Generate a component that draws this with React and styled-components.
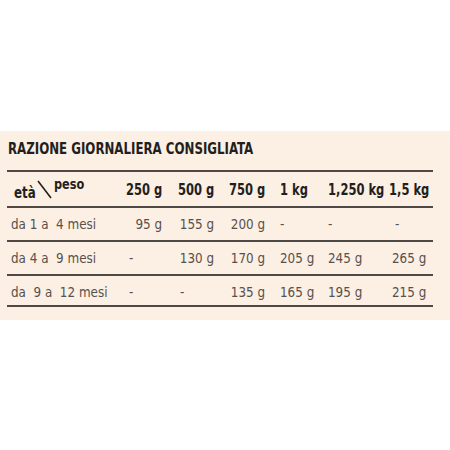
import React from "react";
import styled, { createGlobalStyle } from "styled-components";

const GlobalStyle = createGlobalStyle`
    html, body {
        margin: 0;
        padding: 0;
        background: #ffffff;
    }
    body {
        font-family: "Liberation Sans Narrow", "DejaVu Sans Condensed", "Liberation Sans", sans-serif;
    }
`;

const Page = styled.div`
    width: 450px;
    height: 450px;
    padding-top: 131px;
    box-sizing: border-box;
`;

const Panel = styled.div`
    background-color: #fcefe4;
    padding: 9px 17px 13px 7px;
`;

const Title = styled.h2`
    margin: 0 0 12px 1px;
    font-size: 15px;
    font-weight: bold;
    color: #231f1c;
    line-height: 18px;
    white-space: nowrap;
`;

// the print uses a condensed face, so the text is squeezed horizontally
const Squeeze = styled.span`
    display: inline-block;
    flex-shrink: 0;
    transform: scaleX(${props => props.$scale || 0.95});
    transform-origin: ${props => props.$origin || "left"} center;
    white-space: pre;
`;

const Table = styled.div`
    border-top: 2px solid #4f4a45;
`;

const Row = styled.div`
    display: grid;
    grid-template-columns: 119px 51px 52px 51px 48px 61px 44px;
    align-items: center;
    height: ${props => props.$height || 32}px;
    padding-top: ${props => props.$offset || 0}px;
    border-bottom: 2px solid #4f4a45;
    box-sizing: content-box;
`;

const Cell = styled.div`
    display: flex;
    justify-content: ${props => props.$right ? "flex-end" : "flex-start"};
    min-width: 0;
    font-size: ${props => props.$head ? 16 : 14}px;
    font-weight: ${props => props.$head ? "bold" : "normal"};
    color: ${props => props.$head ? "#231f1c" : "#57514c"};
    padding-right: ${props => props.$right ? 15 : 0}px;
    padding-left: ${props => props.$pad || 0}px;
`;

const Corner = styled.div`
    position: relative;
    height: 100%;
    font-weight: bold;
    color: #231f1c;
`;

const Eta = styled.span`
    position: absolute;
    left: 7px;
    bottom: 4px;
    font-size: 15px;
`;

const Peso = styled.span`
    position: absolute;
    left: 47px;
    top: 4px;
    font-size: 14px;
`;

const Slash = styled.svg`
    position: absolute;
    left: 30px;
    top: 8px;
`;

const columns = ["250 g", "500 g", "750 g", "1 kg", "1,250 kg", "1,5 kg"];

const rows = [
    { label: "da 1 a  4 mesi", values: ["95 g", "155 g", "200 g", "-", "-", "-"] },
    { label: "da 4 a  9 mesi", values: ["-", "130 g", "170 g", "205 g", "245 g", "265 g"] },
    { label: "da  9 a  12 mesi", values: ["-", "-", "135 g", "165 g", "195 g", "215 g"] },
];

function valueCell(value, index) {
    const dash = value === "-";
    if (index < 3) {
        return (
            <Cell key={index} $right={!dash} $pad={dash ? 3 : 0}>
                <Squeeze $origin={dash ? "left" : "right"}>{value}</Squeeze>
            </Cell>
        );
    }
    const pad = index === 5 ? (dash ? 6 : 3) : 0;
    return (
        <Cell key={index} $pad={pad}>
            <Squeeze>{value}</Squeeze>
        </Cell>
    );
}

function App() {
    return (
        <Page>
            <GlobalStyle />
            <Panel>
                <Title>
                    <Squeeze $scale={0.875}>RAZIONE GIORNALIERA CONSIGLIATA</Squeeze>
                </Title>
                <Table>
                    <Row $height={34}>
                        <Corner>
                            <Eta>
                                <Squeeze $scale={0.88}>età</Squeeze>
                            </Eta>
                            <Slash width="16" height="20" viewBox="0 0 16 20">
                                <line x1="1" y1="1" x2="14" y2="18" stroke="#231f1c" strokeWidth="1.6" />
                            </Slash>
                            <Peso>
                                <Squeeze $scale={0.9}>peso</Squeeze>
                            </Peso>
                        </Corner>
                        {columns.map((col, i) => (
                            <Cell key={col} $head $right={i < 3}>
                                <Squeeze $scale={0.8} $origin={i < 3 ? "right" : "left"}>
                                    {col}
                                </Squeeze>
                            </Cell>
                        ))}
                    </Row>
                    {rows.map((row, r) => (
                        <Row key={row.label} $height={r === 2 ? 27 : 32} $offset={r === 2 ? 2 : 0}>
                            <Cell $pad={4}>
                                <Squeeze>{row.label}</Squeeze>
                            </Cell>
                            {row.values.map(valueCell)}
                        </Row>
                    ))}
                </Table>
            </Panel>
        </Page>
    );
}

export default App;
